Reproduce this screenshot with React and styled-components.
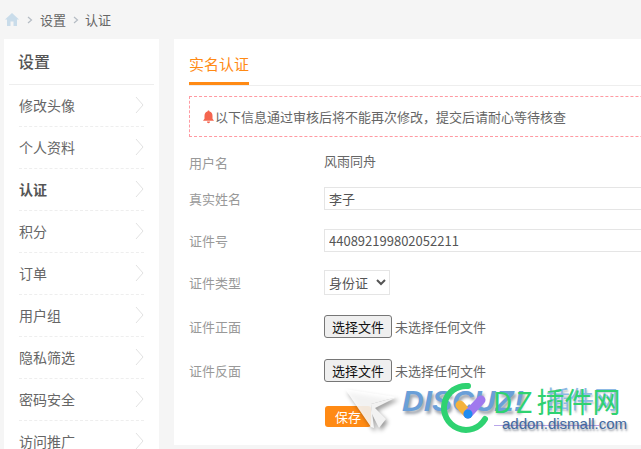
import React from 'react'
import styled, { createGlobalStyle } from 'styled-components'

const GlobalStyle = createGlobalStyle`
    html, body {
        margin:0;
        padding:0;
        height:449px;
        overflow:hidden;
        background:#f5f5f5;
        font-family:"Noto Sans CJK SC","Liberation Sans",sans-serif;
    }
`
const Page = styled.div`
    position:relative;
    width:641px;
    height:449px;
    overflow:hidden;
`
const Crumbs = styled.div`
    height:39px;
    padding-left:5px;
    display:flex;
    align-items:center;
    font-size:13px;
    color:#666;
`
const Sep = styled.span`
    width:9px;
    margin:0 3px 0 7px;
    display:flex;
    &:first-of-type{
        margin:0 4px 0 8px;
    }
`
const Body = styled.div`
    display:flex;
    padding-left:4px;
    gap:15px;
`
const Side = styled.div`
    flex:none;
    width:155px;
    height:440px;
    background:#fff;
    padding:0 5px;
    box-sizing:border-box;
`
const SideTitle = styled.div`
    height:45px;
    padding-left:9px;
    line-height:45px;
    font-size:16px;
    font-weight:500;
    color:#555;
    border-bottom:1px solid #eee;
`
const SideItem = styled.div`
    height:39px;
    margin:0 10px;
    padding-bottom:2px;
    display:flex;
    align-items:center;
    justify-content:space-between;
    font-size:14px;
    font-weight:${props=>props.$active?'700':'400'};
    color:${props=>props.$active?'#555':'#666'};
    border-bottom:1px dashed #eee;
`
const Main = styled.div`
    flex:none;
    width:620px;
    height:406px;
    background:#fff;
    padding:0 0 0 15px;
    box-sizing:border-box;
`
const TabBar = styled.div`
    height:46px;
    border-bottom:1px solid #eee;
    display:flex;
`
const Tab = styled.div`
    height:43px;
    width:60px;
    line-height:50px;
    font-size:15px;
    color:#ff8a14;
    border-bottom:3px solid #ff8a14;
`
const Notice = styled.div`
    margin-top:10px;
    height:41px;
    box-sizing:border-box;
    border:1px dashed #ff9aa2;
    display:flex;
    align-items:center;
    padding-left:12px;
    font-size:13px;
    color:#666;
`
const Form = styled.div`
    padding-top:13px;
    font-size:13px;
    color:#999;
`
const Row = styled.div`
    height:${props=>props.$h}px;
    display:flex;
    align-items:center;
`
const Label = styled.div`
    width:135px;
    flex:none;
`
const Value = styled.div`
    color:#666;
    margin-top:-3px;
`
const TextInput = styled.input`
    width:400px;
    height:23px;
    box-sizing:border-box;
    border:1px solid #e5e5e5;
    padding:0 4px;
    font:13px "Noto Sans CJK SC","Liberation Sans",sans-serif;
    color:#555;
    outline:none;
`
const Select = styled.select`
    width:66px;
    height:25px;
    box-sizing:border-box;
    border:1px solid #e5e5e5;
    background:#fff;
    font:13px "Noto Sans CJK SC","Liberation Sans",sans-serif;
    color:#555;
`
const FileButton = styled.button`
    width:68px;
    height:23px;
    padding:0;
    box-sizing:border-box;
    background:#efefef;
    border:1px solid #767676;
    border-radius:3px;
    font:13px "Noto Sans CJK SC","Liberation Sans",sans-serif;
    color:#111;
`
const FileHint = styled.span`
    margin-left:3px;
    color:#666;
`
const Save = styled.button`
    width:46px;
    height:21px;
    margin-left:136px;
    margin-top:12px;
    padding:0;
    border:none;
    border-radius:3px;
    background:#ff8a14;
    color:#fff;
    font:13px "Noto Sans CJK SC","Liberation Sans",sans-serif;
    display:block;
    text-align:left;
    text-indent:10px;
`
/* the site's watermark sits on top of the page */
const Mark = styled.div`
    position:absolute;
    left:0;
    top:0;
    width:641px;
    height:449px;
    pointer-events:none;
`
const MarkCursor = styled.svg`
    position:absolute;
    left:342px;
    top:386px;
    filter:drop-shadow(2px 3px 2px rgba(0,0,0,.4));
`
const MarkDiscuz = styled.div`
    position:absolute;
    left:402px;
    top:384px;
    font:italic 700 30px/34px "Liberation Sans",sans-serif;
    color:#6a9fd8;
    text-shadow:2px 3px 3px rgba(40,50,70,.45);
`
const MarkGhost = styled.div`
    position:absolute;
    left:546px;
    top:383px;
    font-size:24px;
    line-height:30px;
    color:#8db9e4;
    text-shadow:1px 2px 2px rgba(40,50,70,.3);
`
const MarkLogo = styled.svg`
    position:absolute;
    left:437px;
    top:380px;
`
const MarkName = styled.div`
    position:absolute;
    left:493px;
    top:382px;
    font:400 28px/38px "Noto Sans CJK SC",sans-serif;
    color:#2fd271;
    white-space:nowrap;
`
const MarkLatin = styled.span`
    letter-spacing:4px;
`
const MarkLine = styled.div`
    position:absolute;
    left:494px;
    top:425px;
    width:105px;
    height:1px;
    background:#b9a6ea;
`
const MarkUrl = styled.div`
    position:absolute;
    left:502px;
    top:414px;
    font:15px/20px "Liberation Sans",sans-serif;
    color:#42689f;
    text-shadow:1px 2px 2px rgba(40,50,70,.5);
`

const Chevron = () => (
    <svg width="9" height="18" viewBox="0 0 9 18" fill="none" stroke="#e2e2e2" strokeWidth="1">
        <path d="M1 1l7 8-7 8"/>
    </svg>
)
const SmallSep = () => (
    <svg width="6" height="8" viewBox="0 0 6 8" fill="none" stroke="#b5bcc4" strokeWidth="1.2">
        <path d="M1 1l3.500 3L1 7"/>
    </svg>
)

const menu = ['修改头像','个人资料','认证','积分','订单','用户组','隐私筛选','密码安全','访问推广']

const App = () => {
  return (
    <Page>
        <GlobalStyle/>
        <Crumbs>
            <svg width="14" height="13" viewBox="0 0 14 13" fill="#c9dcea">
                <path d="M7 0L0 6.500h2V13h3.500V8.500h3V13H12V6.500h2z"/>
            </svg>
            <Sep><SmallSep/></Sep>
            设置
            <Sep><SmallSep/></Sep>
            认证
        </Crumbs>
        <Body>
            <Side>
                <SideTitle>设置</SideTitle>
                {menu.map(m=>(
                    <SideItem key={m} $active={m==='认证'}>{m}<Chevron/></SideItem>
                ))}
            </Side>
            <Main>
                <TabBar><Tab>实名认证</Tab></TabBar>
                <Notice>
                    <svg width="13" height="14" viewBox="0 0 13 14" fill="#f4654f">
                        <path d="M6.500 0.500c.6 0 1 .4 1 1 2 .5 3 2.200 3 4.200v3l1.500 2H1l1.500-2v-3c0-2 1-3.700 3-4.200 0-.6.400-1 1-1zM5 11.500h3c0 1-.6 1.700-1.500 1.700S5 12.500 5 11.500z"/>
                    </svg>
                    以下信息通过审核后将不能再次修改，提交后请耐心等待核查
                </Notice>
                <Form>
                    <Row $h={24}><Label>用户名</Label><Value>风雨同舟</Value></Row>
                    <Row $h={48}><Label>真实姓名</Label><TextInput readOnly value="李子"/></Row>
                    <Row $h={36}><Label>证件号</Label><TextInput readOnly value="440892199802052211"/></Row>
                    <Row $h={48}>
                        <Label>证件类型</Label>
                        <Select defaultValue="id"><option value="id">身份证</option></Select>
                    </Row>
                    <Row $h={40}><Label>证件正面</Label><FileButton>选择文件</FileButton><FileHint>未选择任何文件</FileHint></Row>
                    <Row $h={48}><Label>证件反面</Label><FileButton>选择文件</FileButton><FileHint>未选择任何文件</FileHint></Row>
                    <Save>保存</Save>
                </Form>
            </Main>
        </Body>
        <Mark>
            <MarkDiscuz>DISCUZ!</MarkDiscuz>
            <MarkGhost>插件网</MarkGhost>
            <MarkLine/>
            <MarkCursor width="60" height="48" viewBox="0 0 60 48">
                <path d="M3 3L55 11 29 18 32 42 29 41z" fill="#fff" fillOpacity=".85"/>
                <path d="M29 18L55 11 33 22 44 33 37 42 30 28z" fill="#f2f2f2"/>
            </MarkCursor>
            <MarkLogo width="54" height="58" viewBox="0 0 54 58" fill="none">
                <path d="M31 6A22 22 0 1 0 48 39" stroke="#2fd271" strokeWidth="6" strokeLinecap="round"/>
                <path d="M23 25L31 34" stroke="#f4b23c" strokeWidth="9" strokeLinecap="round"/>
                <path d="M31 34L44 20" stroke="#a079ee" strokeWidth="9" strokeLinecap="round"/>
                <circle cx="31" cy="34" r="4.500" fill="#1f8cf0"/>
            </MarkLogo>
            <MarkName><MarkLatin>DZ</MarkLatin>插件网</MarkName>
            <MarkUrl>addon.dismall.com</MarkUrl>
        </Mark>
    </Page>
  )
}

export default App
